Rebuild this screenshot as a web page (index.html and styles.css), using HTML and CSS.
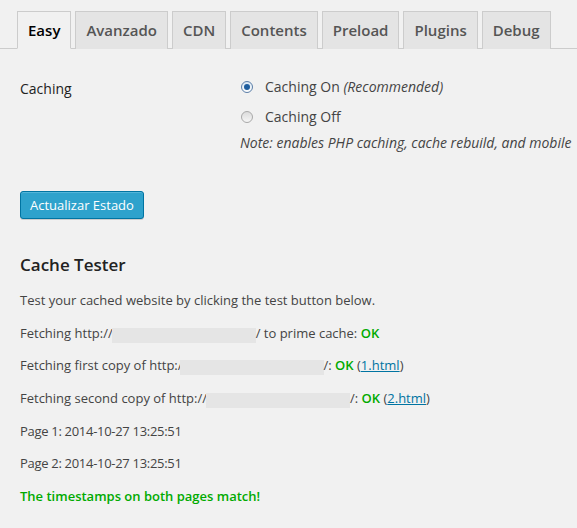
FILE: index.html
```html
<!DOCTYPE html>
<html lang="en">
<head>
    <meta charset="UTF-8">
    <meta name="viewport" content="width=device-width, initial-scale=1.0">
    <title>WP Super Cache Settings</title>
    <link rel="stylesheet" href="styles.css">
</head>
<body>

<div class="wrap">
    <h2 class="nav-tab-wrapper">
        <a class="nav-tab nav-tab-active" href="#">Easy</a>
        <a class="nav-tab" href="#">Avanzado</a>
        <a class="nav-tab" href="#">CDN</a>
        <a class="nav-tab" href="#">Contents</a>
        <a class="nav-tab" href="#">Preload</a>
        <a class="nav-tab" href="#">Plugins</a>
        <a class="nav-tab" href="#">Debug</a>
    </h2>

    <div class="content">
        <div class="form-row">
            <div class="form-label">Caching</div>
            <div class="form-field">
                <label class="radio-line"><span class="radio checked"></span><span>Caching On <em>(Recommended)</em></span></label>
                <label class="radio-line"><span class="radio"></span><span>Caching Off</span></label>
                <p class="note">Note: enables PHP caching, cache rebuild, and mobile</p>
            </div>
        </div>

        <button class="button-primary">Actualizar Estado</button>

        <h3>Cache Tester</h3>
        <p>Test your cached website by clicking the test button below.</p>
        <p>Fetching http://<span class="hidden-url"></span>/ to prime cache: <span class="ok">OK</span></p>
        <p>Fetching first copy of http:/<span class="hidden-url tight"></span>/: <span class="ok">OK</span> (<a href="#">1.html</a>)</p>
        <p>Fetching second copy of http://<span class="hidden-url"></span>/: <span class="ok">OK</span> (<a href="#">2.html</a>)</p>
        <p class="stamp">Page 1: 2014-10-27 13:25:51</p>
        <p class="stamp">Page 2: 2014-10-27 13:25:51</p>
        <p class="match">The timestamps on both pages match!</p>
    </div>
</div>

</body>
</html>
```

FILE: styles.css
```css
body {
    margin: 0;
    padding: 0;
    background: #f1f1f1;
    font-family: "Open Sans", sans-serif;
    color: #444;
    font-size: 13px;
    overflow: hidden;
}

.wrap {
    padding-top: 11px;
}

/* Tabs */
.nav-tab-wrapper {
    display: flex;
    margin: 0;
    padding: 0 0 0 17px;
    border-bottom: 1px solid #ccc;
    font-weight: normal;
}

.nav-tab {
    display: block;
    margin: 0 4px -1px 0;
    padding: 6px 10px;
    border: 1px solid #ccc;
    border-bottom: none;
    background: #e4e4e4;
    color: #555;
    font-size: 15px;
    line-height: 24px;
    text-decoration: none;
    font-weight: 600;
}

.nav-tab-active {
    background: #f1f1f1;
    color: #000;
    border-bottom: 1px solid #f1f1f1;
}

.content {
    padding-left: 20px;
}

/* Settings row */
.form-row {
    display: flex;
    padding-top: 28px;
}

.form-label {
    width: 220px;
    flex-shrink: 0;
    padding-top: 2px;
    font-size: 14px;
    line-height: 20px;
    color: #222;
}

.form-field {
    font-size: 14px;
    color: #444;
}

.radio-line {
    display: flex;
    align-items: center;
    line-height: 20px;
    margin-bottom: 10px;
}

.radio {
    box-sizing: border-box;
    width: 12px;
    height: 12px;
    margin: 0 12px 0 1px;
    border: 1px solid #a9a9a9;
    border-radius: 50%;
    background: linear-gradient(#dcdcdc, #f6f6f6);
    position: relative;
}

.radio.checked {
    border-color: #5b7ea8;
    background: linear-gradient(#d8e6f3, #fdfdfd);
}

.radio.checked::after {
    content: "";
    position: absolute;
    left: 2px;
    top: 2px;
    width: 6px;
    height: 6px;
    border-radius: 50%;
    background: #1e5d9e;
}

.note {
    margin: -4px 0 0 0;
    line-height: 20px;
    font-size: 14px;
    font-style: italic;
    white-space: nowrap;
    color: #444;
}

/* Button */
.button-primary {
    display: block;
    height: 28px;
    margin-top: 38px;
    padding: 0 9px 1px;
    border: 1px solid #0074a2;
    border-radius: 3px;
    background: #2ea2cc;
    box-shadow: inset 0 1px 0 rgba(120, 200, 230, 0.5), 0 1px 0 rgba(0, 0, 0, 0.15);
    color: #fff;
    font-family: "Open Sans", sans-serif;
    font-size: 13px;
    line-height: 26px;
    cursor: pointer;
}

h3 {
    margin: 34px 0 13px 0;
    font-size: 17px;
    line-height: 24px;
    font-weight: 600;
    color: #222;
}

p {
    margin: 0 0 12.7px 0;
    line-height: 20px;
}

.stamp {
    letter-spacing: -0.3px;
}

.hidden-url {
    display: inline-block;
    width: 144px;
    height: 15px;
    margin-left: -1px;
    background: #e5e5e5;
    vertical-align: -5px;
}

.hidden-url.tight {
    margin-left: -3px;
}

.ok {
    color: #0a0;
    font-weight: 600;
}

a {
    color: #0074a2;
}

.match {
    color: #0a0;
    font-weight: 600;
}
```
